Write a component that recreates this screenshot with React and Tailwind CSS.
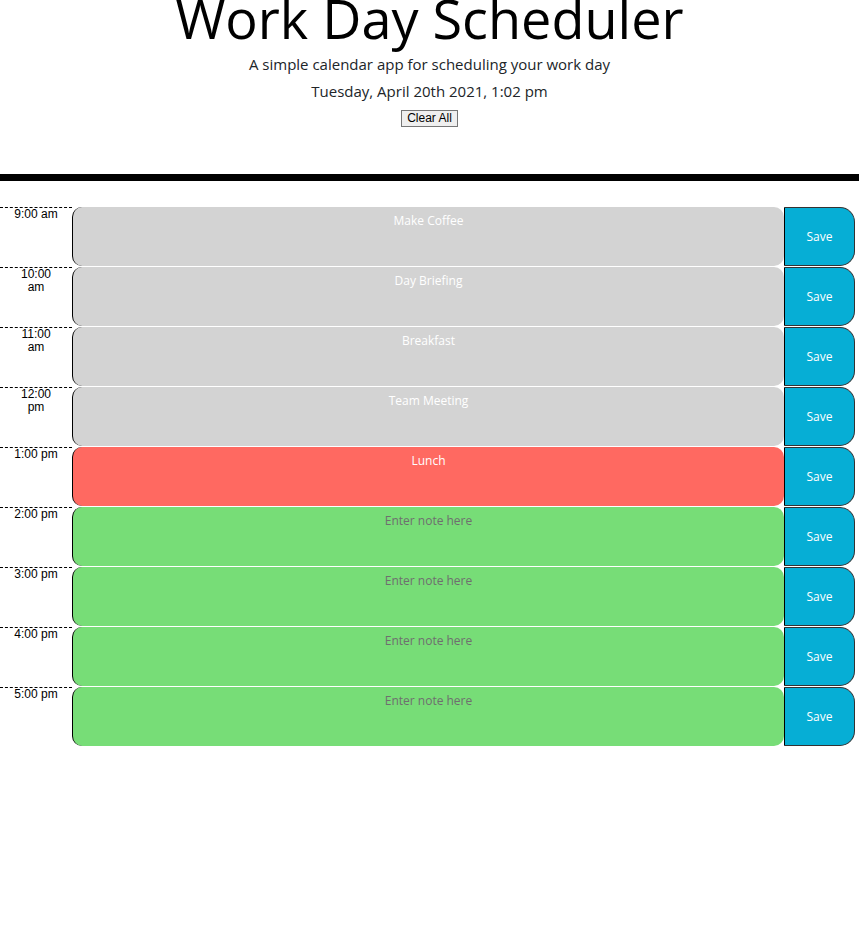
import { useState } from "react";

const hours = [
  { label: "9:00 am", text: "Make Coffee", state: "past" },
  { label: "10:00 am", text: "Day Briefing", state: "past" },
  { label: "11:00 am", text: "Breakfast", state: "past" },
  { label: "12:00 pm", text: "Team Meeting", state: "past" },
  { label: "1:00 pm", text: "Lunch", state: "present" },
  { label: "2:00 pm", text: "", state: "future" },
  { label: "3:00 pm", text: "", state: "future" },
  { label: "4:00 pm", text: "", state: "future" },
  { label: "5:00 pm", text: "", state: "future" },
];

const bg = {
  past: "bg-[#d3d3d3]",
  present: "bg-[#ff6961]",
  future: "bg-[#77dd77]",
};

function HourRow({ hour }) {
  const [note, setNote] = useState(hour.text);
  return (
    <div className="flex h-[60px]">
      <div className="w-[72px] shrink-0 border-t border-dashed border-black px-[12px] text-center text-[12px] leading-[13px] text-black font-['Liberation_Sans',Arial,sans-serif]">
        {hour.label}
      </div>
      <textarea
        value={note}
        onChange={(e) => setNote(e.target.value)}
        placeholder="Enter note here"
        className={`flex-1 h-[59px] resize-none rounded-[10px] border-l border-black ${bg[hour.state]} px-2 pt-[5px] text-center text-[12px] leading-[18px] text-white placeholder:text-[#6f6f6f] outline-none`}
      />
      <button className="w-[71px] h-[59px] shrink-0 rounded-r-[15px] border border-[#333] border-l-black bg-[#06aed5] text-[12px] text-white">
        Save
      </button>
      <div className="w-[4px]" />
    </div>
  );
}

export default function App() {
  return (
    <div className="min-h-[940px] bg-white font-['Open_Sans',sans-serif] text-[#212529] overflow-hidden">
      <header className="flex flex-col items-center text-center">
        <h1 className="-mt-[9px] text-[54px] leading-[54px] font-normal text-black">
          Work Day Scheduler
        </h1>
        <p className="mt-[7px] text-[15px] leading-[24px]">
          A simple calendar app for scheduling your work day
        </p>
        <p className="mt-[3px] text-[15px] leading-[24px]">
          Tuesday, April 20th 2021, 1:02 pm
        </p>
        <button className="mt-[7px] border border-[#767676] bg-[#efefef] px-[5px] text-[12px] leading-[15px] text-black font-['Liberation_Sans',Arial,sans-serif]">
          Clear All
        </button>
      </header>
      <div className="mt-[47px] h-[7px] bg-black" />
      <div className="mt-[26px] flex flex-col">
        {hours.map((h) => (
          <HourRow key={h.label} hour={h} />
        ))}
      </div>
    </div>
  );
}
